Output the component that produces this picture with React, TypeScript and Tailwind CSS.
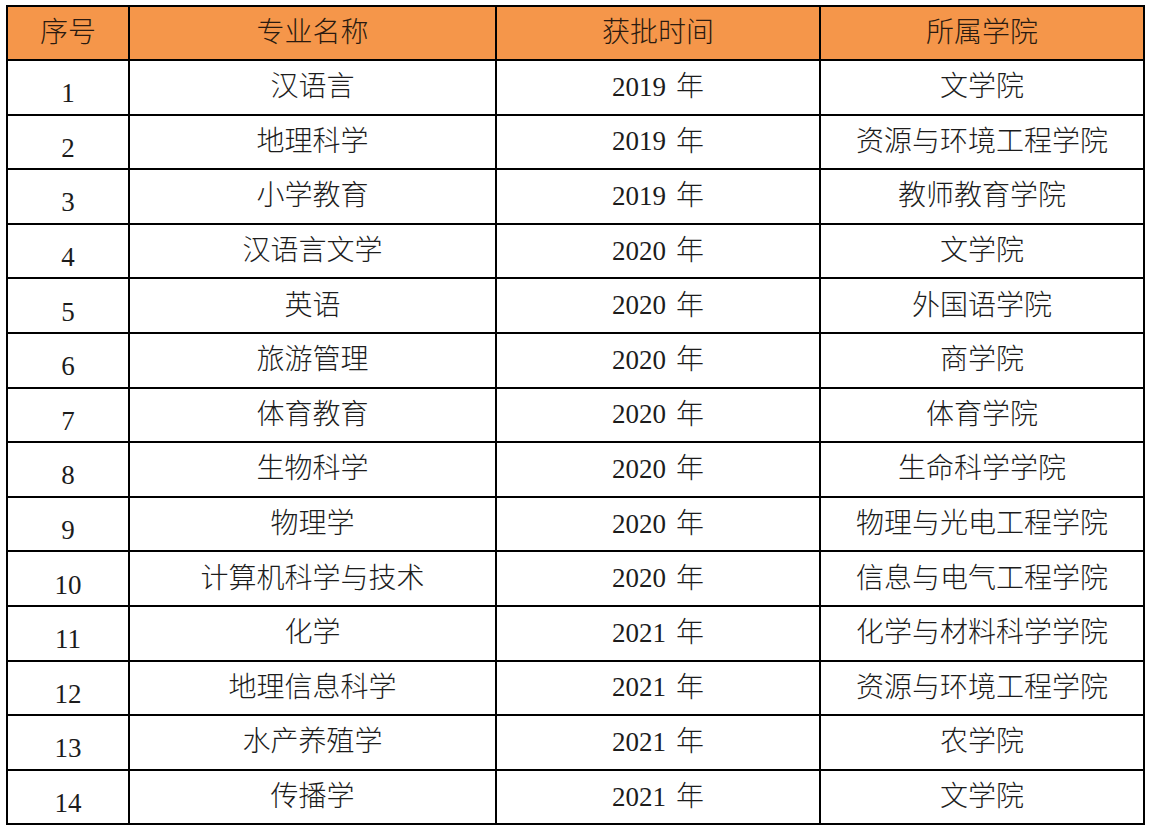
import React from "react";

const rows: [string, string, string, string][] = [
  ["1", "汉语言", "2019", "文学院"],
  ["2", "地理科学", "2019", "资源与环境工程学院"],
  ["3", "小学教育", "2019", "教师教育学院"],
  ["4", "汉语言文学", "2020", "文学院"],
  ["5", "英语", "2020", "外国语学院"],
  ["6", "旅游管理", "2020", "商学院"],
  ["7", "体育教育", "2020", "体育学院"],
  ["8", "生物科学", "2020", "生命科学学院"],
  ["9", "物理学", "2020", "物理与光电工程学院"],
  ["10", "计算机科学与技术", "2020", "信息与电气工程学院"],
  ["11", "化学", "2021", "化学与材料科学学院"],
  ["12", "地理信息科学", "2021", "资源与环境工程学院"],
  ["13", "水产养殖学", "2021", "农学院"],
  ["14", "传播学", "2021", "文学院"],
];

const font = { fontFamily: '"Liberation Serif", "Noto Sans CJK SC", serif' };

export default function App() {
  return (
    <div className="w-[1150px] h-[829px] bg-white overflow-hidden" style={font}>
      <div className="ml-[6px] mt-[5px] w-[1139px] border-t-2 border-l-2 border-black text-[28px] leading-none text-[#1c1c1c]">
        <div className="grid grid-cols-[122px_367px_324px_324px] h-[54px] bg-[#f5964a] text-[#2a1a10]">
          <div className="flex items-center justify-center border-r-2 border-b-2 border-black font-light">序号</div>
          <div className="flex items-center justify-center border-r-2 border-b-2 border-black font-light">专业名称</div>
          <div className="flex items-center justify-center border-r-2 border-b-2 border-black font-light">获批时间</div>
          <div className="flex items-center justify-center border-r-2 border-b-2 border-black font-light">所属学院</div>
        </div>
        {rows.map((r) => (
          <div key={r[0]} className="grid grid-cols-[122px_367px_324px_324px] h-[54.6px]">
            <div className="flex items-center justify-center border-r-2 border-b-2 border-black pt-[13px] text-[27px]">{r[0]}</div>
            <div className="flex items-center justify-center border-r-2 border-b-2 border-black font-light">{r[1]}</div>
            <div className="flex items-center justify-center border-r-2 border-b-2 border-black">
              <span className="text-[27px]">{r[2]}</span>
              <span className="ml-[10px] font-light">年</span>
            </div>
            <div className="flex items-center justify-center border-r-2 border-b-2 border-black font-light">{r[3]}</div>
          </div>
        ))}
      </div>
    </div>
  );
}
